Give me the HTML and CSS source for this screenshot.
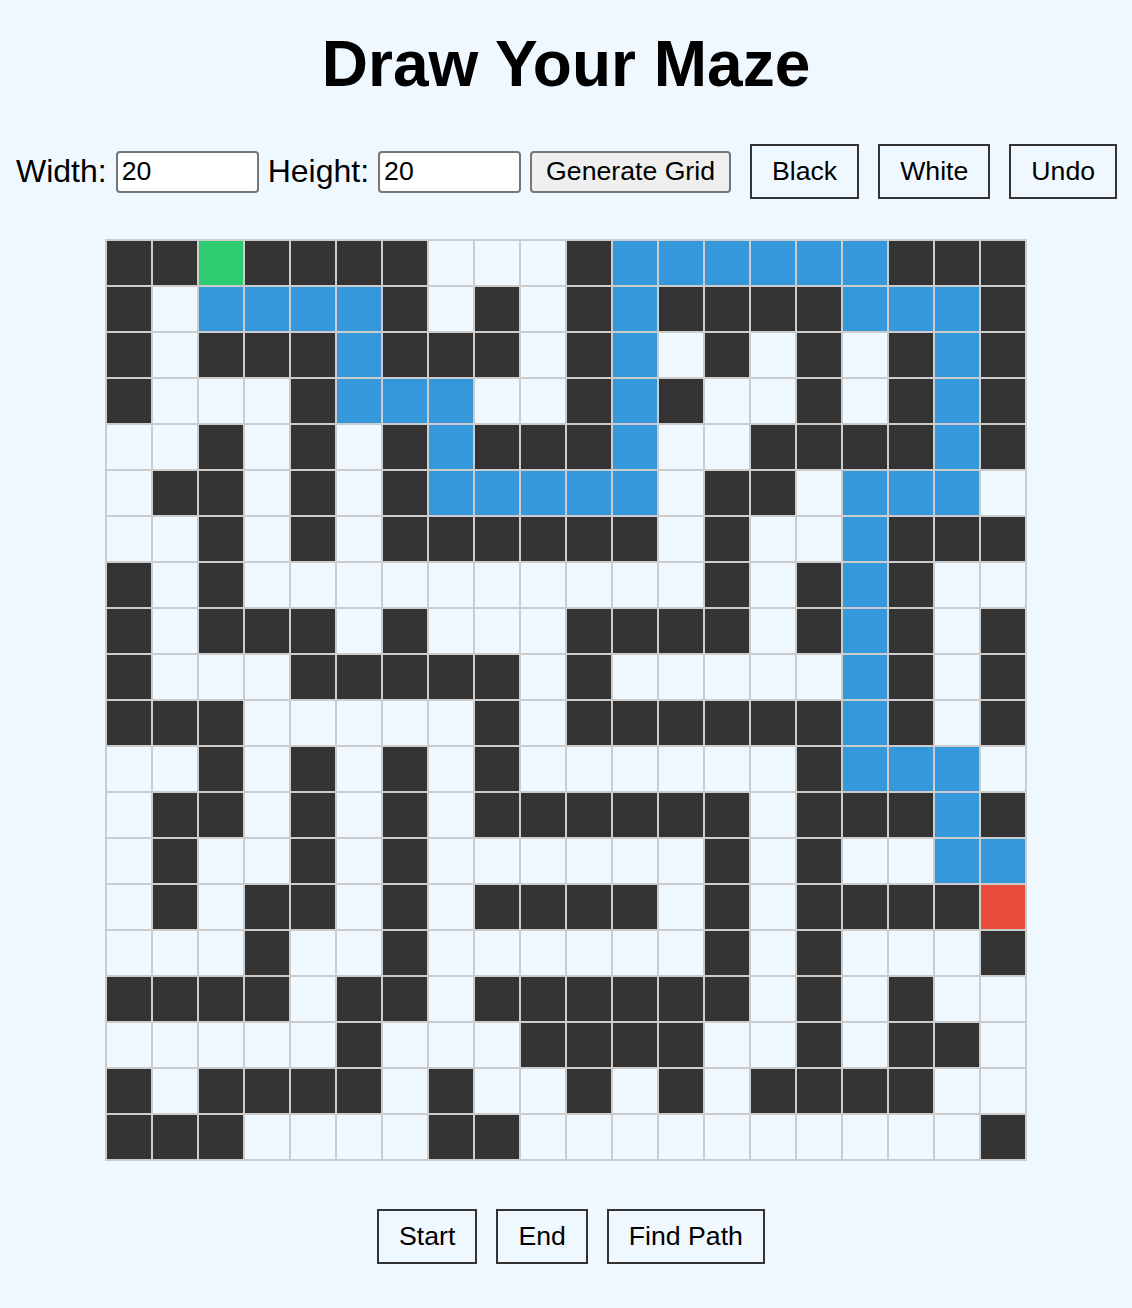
FILE: index.html
```html
<!DOCTYPE html>
<html lang="en">
<head>
<meta charset="utf-8">
<title>Draw Your Maze</title>
<link rel="stylesheet" href="styles.css">
</head>
<body>
<main class="page">
  <h1 class="title">Draw Your Maze</h1>
  <div class="controls">
    <label class="field-label" for="w">Width:</label>
    <input class="num-input" id="w" type="number" value="20">
    <label class="field-label" for="h">Height:</label>
    <input class="num-input" id="h" type="number" value="20">
    <button class="sys-btn">Generate Grid</button>
    <button class="tool-btn">Black</button>
    <button class="tool-btn">White</button>
    <button class="tool-btn">Undo</button>
  </div>
  <div class="maze">
    <div class="c k"></div><div class="c k"></div><div class="c s"></div><div class="c k"></div><div class="c k"></div><div class="c k"></div><div class="c k"></div><div class="c o"></div><div class="c o"></div><div class="c o"></div><div class="c k"></div><div class="c p"></div><div class="c p"></div><div class="c p"></div><div class="c p"></div><div class="c p"></div><div class="c p"></div><div class="c k"></div><div class="c k"></div><div class="c k"></div>
    <div class="c k"></div><div class="c o"></div><div class="c p"></div><div class="c p"></div><div class="c p"></div><div class="c p"></div><div class="c k"></div><div class="c o"></div><div class="c k"></div><div class="c o"></div><div class="c k"></div><div class="c p"></div><div class="c k"></div><div class="c k"></div><div class="c k"></div><div class="c k"></div><div class="c p"></div><div class="c p"></div><div class="c p"></div><div class="c k"></div>
    <div class="c k"></div><div class="c o"></div><div class="c k"></div><div class="c k"></div><div class="c k"></div><div class="c p"></div><div class="c k"></div><div class="c k"></div><div class="c k"></div><div class="c o"></div><div class="c k"></div><div class="c p"></div><div class="c o"></div><div class="c k"></div><div class="c o"></div><div class="c k"></div><div class="c o"></div><div class="c k"></div><div class="c p"></div><div class="c k"></div>
    <div class="c k"></div><div class="c o"></div><div class="c o"></div><div class="c o"></div><div class="c k"></div><div class="c p"></div><div class="c p"></div><div class="c p"></div><div class="c o"></div><div class="c o"></div><div class="c k"></div><div class="c p"></div><div class="c k"></div><div class="c o"></div><div class="c o"></div><div class="c k"></div><div class="c o"></div><div class="c k"></div><div class="c p"></div><div class="c k"></div>
    <div class="c o"></div><div class="c o"></div><div class="c k"></div><div class="c o"></div><div class="c k"></div><div class="c o"></div><div class="c k"></div><div class="c p"></div><div class="c k"></div><div class="c k"></div><div class="c k"></div><div class="c p"></div><div class="c o"></div><div class="c o"></div><div class="c k"></div><div class="c k"></div><div class="c k"></div><div class="c k"></div><div class="c p"></div><div class="c k"></div>
    <div class="c o"></div><div class="c k"></div><div class="c k"></div><div class="c o"></div><div class="c k"></div><div class="c o"></div><div class="c k"></div><div class="c p"></div><div class="c p"></div><div class="c p"></div><div class="c p"></div><div class="c p"></div><div class="c o"></div><div class="c k"></div><div class="c k"></div><div class="c o"></div><div class="c p"></div><div class="c p"></div><div class="c p"></div><div class="c o"></div>
    <div class="c o"></div><div class="c o"></div><div class="c k"></div><div class="c o"></div><div class="c k"></div><div class="c o"></div><div class="c k"></div><div class="c k"></div><div class="c k"></div><div class="c k"></div><div class="c k"></div><div class="c k"></div><div class="c o"></div><div class="c k"></div><div class="c o"></div><div class="c o"></div><div class="c p"></div><div class="c k"></div><div class="c k"></div><div class="c k"></div>
    <div class="c k"></div><div class="c o"></div><div class="c k"></div><div class="c o"></div><div class="c o"></div><div class="c o"></div><div class="c o"></div><div class="c o"></div><div class="c o"></div><div class="c o"></div><div class="c o"></div><div class="c o"></div><div class="c o"></div><div class="c k"></div><div class="c o"></div><div class="c k"></div><div class="c p"></div><div class="c k"></div><div class="c o"></div><div class="c o"></div>
    <div class="c k"></div><div class="c o"></div><div class="c k"></div><div class="c k"></div><div class="c k"></div><div class="c o"></div><div class="c k"></div><div class="c o"></div><div class="c o"></div><div class="c o"></div><div class="c k"></div><div class="c k"></div><div class="c k"></div><div class="c k"></div><div class="c o"></div><div class="c k"></div><div class="c p"></div><div class="c k"></div><div class="c o"></div><div class="c k"></div>
    <div class="c k"></div><div class="c o"></div><div class="c o"></div><div class="c o"></div><div class="c k"></div><div class="c k"></div><div class="c k"></div><div class="c k"></div><div class="c k"></div><div class="c o"></div><div class="c k"></div><div class="c o"></div><div class="c o"></div><div class="c o"></div><div class="c o"></div><div class="c o"></div><div class="c p"></div><div class="c k"></div><div class="c o"></div><div class="c k"></div>
    <div class="c k"></div><div class="c k"></div><div class="c k"></div><div class="c o"></div><div class="c o"></div><div class="c o"></div><div class="c o"></div><div class="c o"></div><div class="c k"></div><div class="c o"></div><div class="c k"></div><div class="c k"></div><div class="c k"></div><div class="c k"></div><div class="c k"></div><div class="c k"></div><div class="c p"></div><div class="c k"></div><div class="c o"></div><div class="c k"></div>
    <div class="c o"></div><div class="c o"></div><div class="c k"></div><div class="c o"></div><div class="c k"></div><div class="c o"></div><div class="c k"></div><div class="c o"></div><div class="c k"></div><div class="c o"></div><div class="c o"></div><div class="c o"></div><div class="c o"></div><div class="c o"></div><div class="c o"></div><div class="c k"></div><div class="c p"></div><div class="c p"></div><div class="c p"></div><div class="c o"></div>
    <div class="c o"></div><div class="c k"></div><div class="c k"></div><div class="c o"></div><div class="c k"></div><div class="c o"></div><div class="c k"></div><div class="c o"></div><div class="c k"></div><div class="c k"></div><div class="c k"></div><div class="c k"></div><div class="c k"></div><div class="c k"></div><div class="c o"></div><div class="c k"></div><div class="c k"></div><div class="c k"></div><div class="c p"></div><div class="c k"></div>
    <div class="c o"></div><div class="c k"></div><div class="c o"></div><div class="c o"></div><div class="c k"></div><div class="c o"></div><div class="c k"></div><div class="c o"></div><div class="c o"></div><div class="c o"></div><div class="c o"></div><div class="c o"></div><div class="c o"></div><div class="c k"></div><div class="c o"></div><div class="c k"></div><div class="c o"></div><div class="c o"></div><div class="c p"></div><div class="c p"></div>
    <div class="c o"></div><div class="c k"></div><div class="c o"></div><div class="c k"></div><div class="c k"></div><div class="c o"></div><div class="c k"></div><div class="c o"></div><div class="c k"></div><div class="c k"></div><div class="c k"></div><div class="c k"></div><div class="c o"></div><div class="c k"></div><div class="c o"></div><div class="c k"></div><div class="c k"></div><div class="c k"></div><div class="c k"></div><div class="c e"></div>
    <div class="c o"></div><div class="c o"></div><div class="c o"></div><div class="c k"></div><div class="c o"></div><div class="c o"></div><div class="c k"></div><div class="c o"></div><div class="c o"></div><div class="c o"></div><div class="c o"></div><div class="c o"></div><div class="c o"></div><div class="c k"></div><div class="c o"></div><div class="c k"></div><div class="c o"></div><div class="c o"></div><div class="c o"></div><div class="c k"></div>
    <div class="c k"></div><div class="c k"></div><div class="c k"></div><div class="c k"></div><div class="c o"></div><div class="c k"></div><div class="c k"></div><div class="c o"></div><div class="c k"></div><div class="c k"></div><div class="c k"></div><div class="c k"></div><div class="c k"></div><div class="c k"></div><div class="c o"></div><div class="c k"></div><div class="c o"></div><div class="c k"></div><div class="c o"></div><div class="c o"></div>
    <div class="c o"></div><div class="c o"></div><div class="c o"></div><div class="c o"></div><div class="c o"></div><div class="c k"></div><div class="c o"></div><div class="c o"></div><div class="c o"></div><div class="c k"></div><div class="c k"></div><div class="c k"></div><div class="c k"></div><div class="c o"></div><div class="c o"></div><div class="c k"></div><div class="c o"></div><div class="c k"></div><div class="c k"></div><div class="c o"></div>
    <div class="c k"></div><div class="c o"></div><div class="c k"></div><div class="c k"></div><div class="c k"></div><div class="c k"></div><div class="c o"></div><div class="c k"></div><div class="c o"></div><div class="c o"></div><div class="c k"></div><div class="c o"></div><div class="c k"></div><div class="c o"></div><div class="c k"></div><div class="c k"></div><div class="c k"></div><div class="c k"></div><div class="c o"></div><div class="c o"></div>
    <div class="c k"></div><div class="c k"></div><div class="c k"></div><div class="c o"></div><div class="c o"></div><div class="c o"></div><div class="c o"></div><div class="c k"></div><div class="c k"></div><div class="c o"></div><div class="c o"></div><div class="c o"></div><div class="c o"></div><div class="c o"></div><div class="c o"></div><div class="c o"></div><div class="c o"></div><div class="c o"></div><div class="c o"></div><div class="c k"></div>
  </div>
  <div class="actions">
    <button class="tool-btn">Start</button>
    <button class="tool-btn">End</button>
    <button class="tool-btn">Find Path</button>
  </div>
</main>
</body>
</html>
```

FILE: styles.css
```css
html, body {
  margin: 0;
  padding: 0;
  background: #f0f8ff;
}

body {
  font-family: "Liberation Sans", Arial, sans-serif;
  color: #000;
}

.page {
  padding: 0 16px;
}

.title {
  margin: 27px 0 0;
  font-size: 64px;
  line-height: 74px;
  font-weight: bold;
  text-align: center;
}

.controls {
  margin-top: 43px;
  height: 55px;
  display: flex;
  align-items: center;
  gap: 9px;
  white-space: nowrap;
}

.field-label {
  font-size: 32px;
  line-height: 37px;
}

.num-input {
  box-sizing: border-box;
  width: 143px;
  height: 42px;
  margin: 0;
  padding: 2px 4px;
  border: 2px solid #767676;
  border-radius: 4px;
  background: #fff;
  font-family: "Liberation Sans", Arial, sans-serif;
  font-size: 26.667px;
  color: #000;
  -moz-appearance: textfield;
  appearance: textfield;
}

.num-input::-webkit-outer-spin-button,
.num-input::-webkit-inner-spin-button {
  -webkit-appearance: none;
  margin: 0;
}

.sys-btn {
  box-sizing: border-box;
  height: 42px;
  margin: 0;
  padding: 0 14px;
  border: 2px solid #767676;
  border-radius: 4px;
  background: #efefef;
  font-family: "Liberation Sans", Arial, sans-serif;
  font-size: 26.667px;
  color: #000;
}

.tool-btn {
  margin: 0 0 0 10px;
  padding: 10px 20px;
  border: 2px solid #333;
  border-radius: 0;
  background: transparent;
  font-family: "Liberation Sans", Arial, sans-serif;
  font-size: 26.667px;
  line-height: 31px;
  color: #000;
}

.maze {
  margin: 40px auto 0;
  width: max-content;
  display: grid;
  grid-template-columns: repeat(20, 44px);
  grid-auto-rows: 44px;
  gap: 2px;
  padding: 2px;
  background: #ccc;
}

.c { display: block; }
.k { background: #333; }
.o { background: #f0f8ff; }
.p { background: #3498db; }
.s { background: #2ecc71; }
.e { background: #e74c3c; }

.actions {
  margin-top: 48px;
  display: flex;
  justify-content: center;
  gap: 9px;
}
```
